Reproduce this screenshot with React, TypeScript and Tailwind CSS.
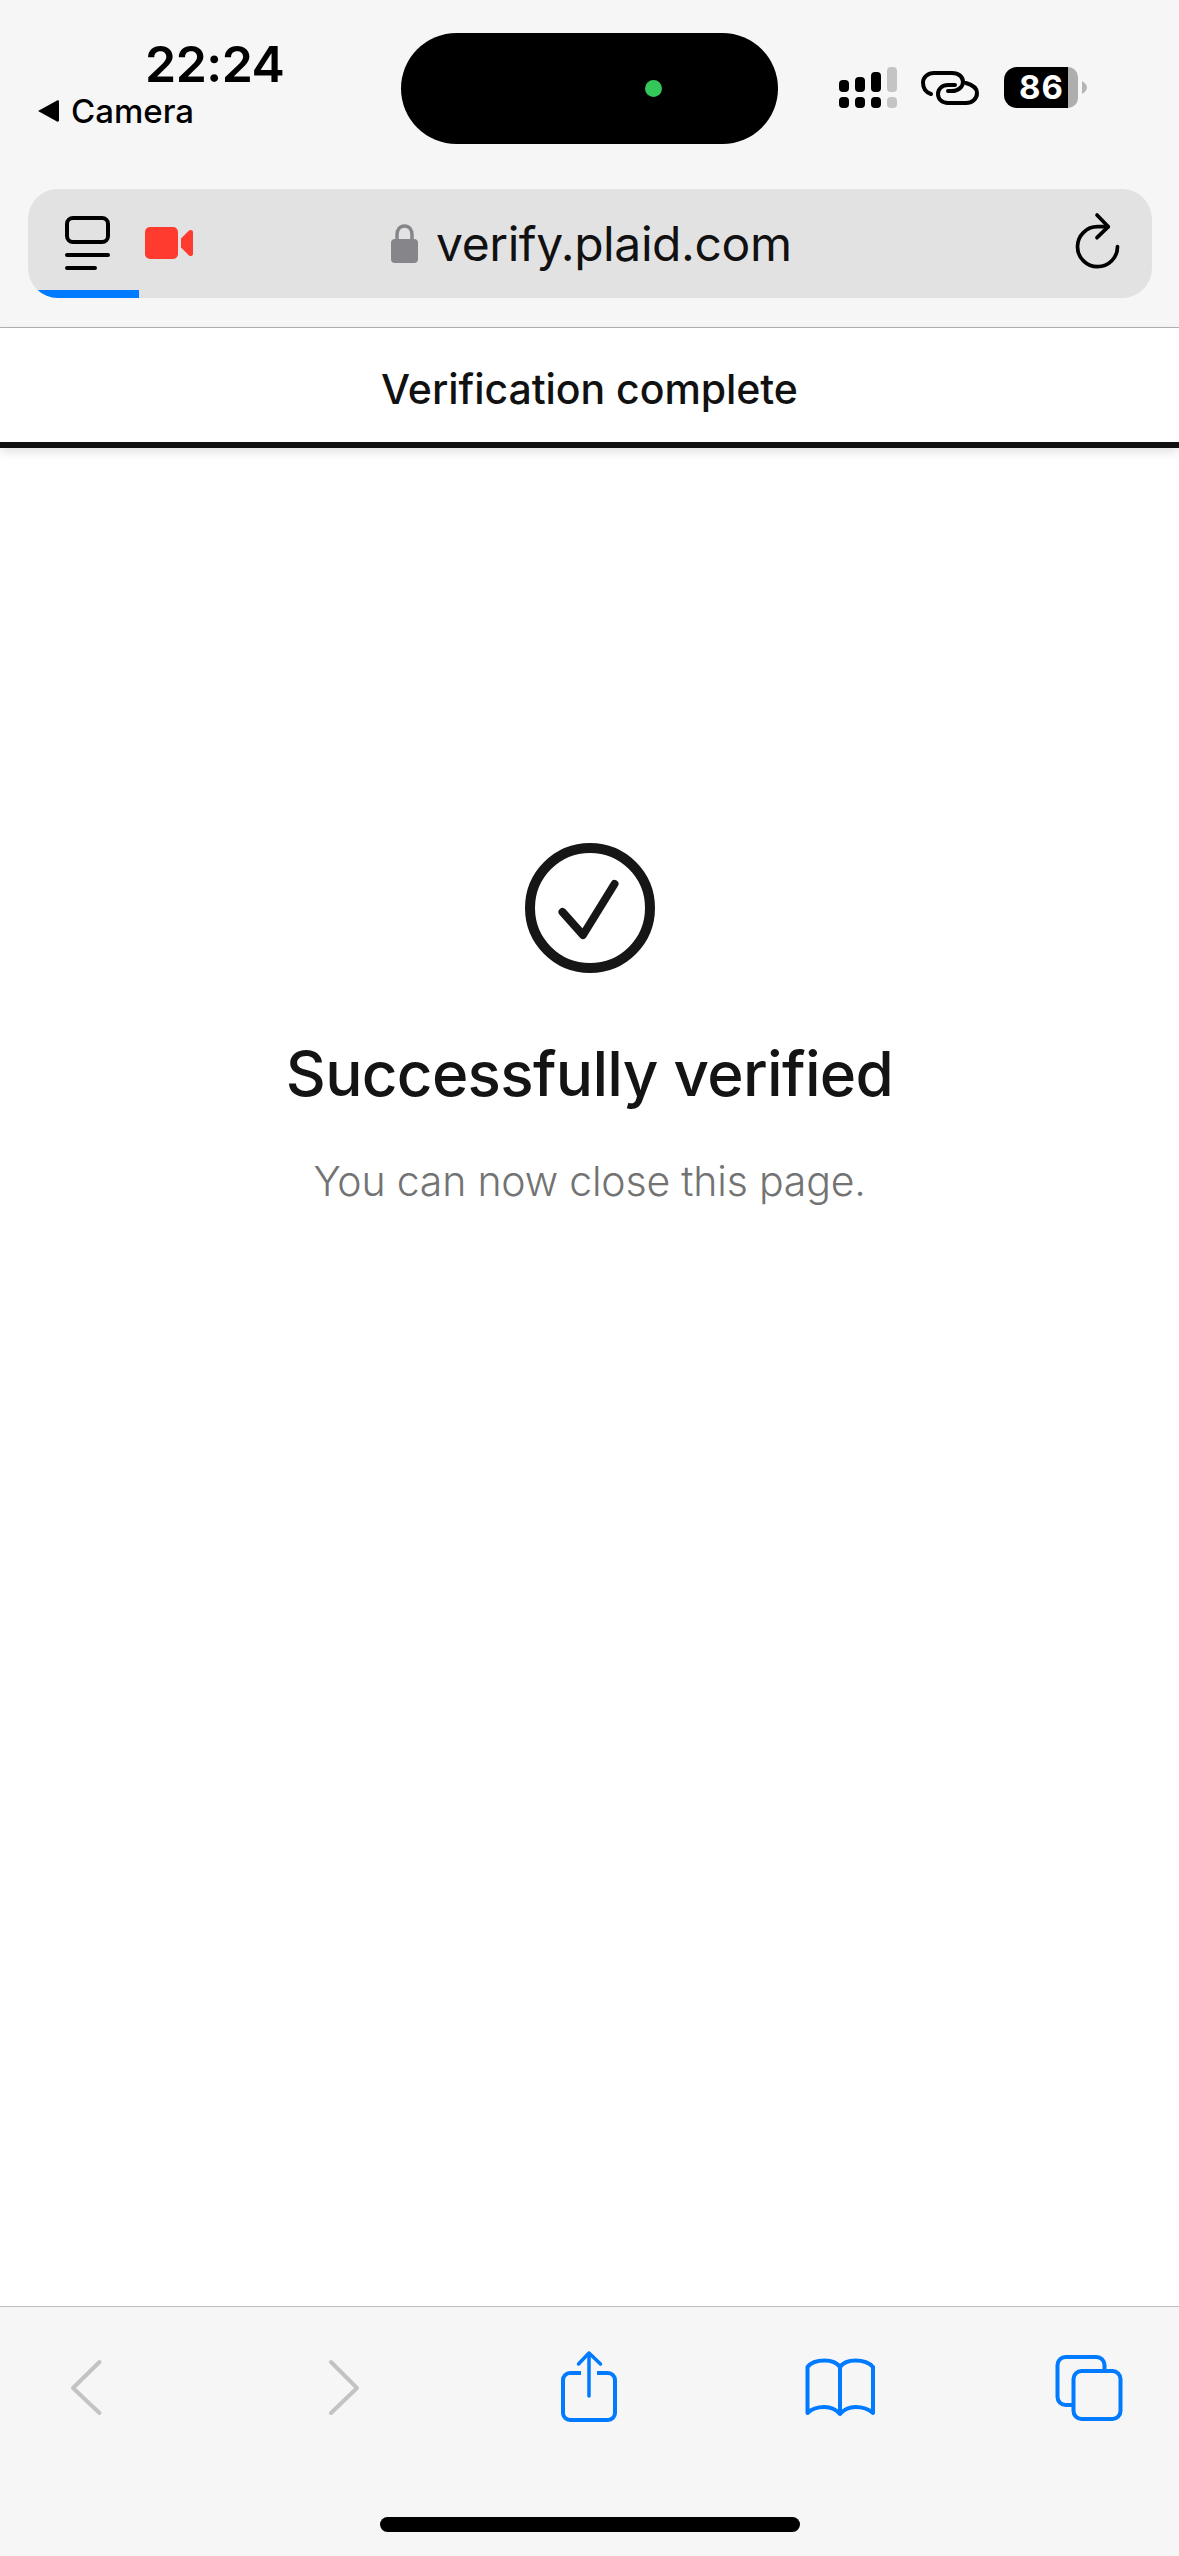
import React from "react";

function Signal() {
  return (
    <svg width="58" height="41" viewBox="0 0 58 41" className="block">
      <g fill="#000">
        <rect x="0" y="13" width="10" height="12" rx="4" />
        <rect x="16" y="10" width="10" height="15" rx="4" />
        <rect x="32" y="5" width="10" height="20" rx="4" />
        <rect x="0" y="30" width="10" height="11" rx="4" />
        <rect x="16" y="30" width="10" height="11" rx="4" />
        <rect x="32" y="30" width="10" height="11" rx="4" />
      </g>
      <g fill="#c4c4c4">
        <rect x="48" y="0" width="10" height="25" rx="4" />
        <rect x="48" y="30" width="10" height="11" rx="4" />
      </g>
    </svg>
  );
}

function LinkIcon() {
  return (
    <svg width="72" height="50" viewBox="0 0 72 50" fill="none" stroke="#000" strokeWidth="4" strokeLinecap="round" className="block">
      <path d="M17 32C11 30 9 25 9 20.5C9 15 14 11 20 11H38C45 11 49 15 49 20C49 25 44 29 38 29H34" />
      <path d="M52 21C59 23 63 27 63 31C63 37 58 41 52 41H34C28 41 24 37 24 32C24 27 28 23 34 23H41" />
    </svg>
  );
}

function Battery() {
  return (
    <div className="flex items-center">
      <div className="w-[64px] h-[41px] bg-black rounded-l-[13px] flex items-center justify-end pr-[4px]">
        <span className="text-white text-[33px] leading-[41px] font-bold tracking-[1px]">86</span>
      </div>
      <div className="w-[10px] h-[41px] bg-[#aeaeae] rounded-r-[13px]" />
      <svg width="5" height="13" viewBox="0 0 5 13" className="block ml-[4px]">
        <path d="M0 0C3 2 5 4 5 6.5C5 9 3 11 0 13Z" fill="#b5b5b5" />
      </svg>
    </div>
  );
}

function TabsOverview() {
  return (
    <svg width="45" height="54" viewBox="0 0 45 54" fill="none" stroke="#000" className="block">
      <rect x="2" y="2" width="41" height="24" rx="6" strokeWidth="4" />
      <rect x="0" y="37" width="45" height="4" rx="2" fill="#000" stroke="none" />
      <rect x="0" y="50" width="32" height="4" rx="2" fill="#000" stroke="none" />
    </svg>
  );
}

function VideoIcon() {
  return (
    <svg width="48" height="32" viewBox="0 0 48 32" className="block">
      <rect x="0" y="0" width="33" height="32" rx="5" fill="#ff3b30" />
      <path d="M36 11.5L44 3.6C45.5 2.4 48 3 48 5V27C48 29 45.500 29.600 44 28.400L36 20.500Z" fill="#ff3b30" />
    </svg>
  );
}

function LockIcon() {
  return (
    <svg width="27" height="39" viewBox="0 0 27 39" className="block">
      <path d="M6 17V11C6 5.500 9 2 13.500 2C18 2 21 5.500 21 11V17" fill="none" stroke="#86868a" strokeWidth="3.500" />
      <rect x="0" y="15" width="27" height="24" rx="4" fill="#86868a" />
    </svg>
  );
}

function Reload() {
  return (
    <svg width="70" height="70" viewBox="0 0 70 70" fill="none" stroke="#000" strokeWidth="3.700" strokeLinecap="round" strokeLinejoin="round" className="block">
      <path d="M32 10L43.300 21.700L32 32.700" />
      <path d="M43 21.700H32.500A20 20 0 1 0 52.500 41.500" />
    </svg>
  );
}

function Back({ flip }: { flip?: boolean }) {
  return (
    <svg width="64" height="72" viewBox="0 0 64 72" fill="none" stroke="#c3c3c3" strokeWidth="4" strokeLinecap="round" strokeLinejoin="round" className="block shrink-0">
      {flip ? <path d="M19 12L45 38L19 63" /> : <path d="M45.500 12L19 38L45.500 63" />}
    </svg>
  );
}

function Share() {
  return (
    <svg width="64" height="72" viewBox="0 0 64 72" fill="none" stroke="#007aff" strokeWidth="4" strokeLinecap="round" strokeLinejoin="round" className="block shrink-0">
      <path d="M24 23H13A7 7 0 0 0 6 30V63A7 7 0 0 0 13 70H51A7 7 0 0 0 58 63V30A7 7 0 0 0 51 23H40" strokeLinecap="butt" />
      <path d="M32 3V46M21.500 14L32 3L43.500 14" strokeWidth="3.500" />
    </svg>
  );
}

function Book() {
  return (
    <svg width="76" height="72" viewBox="6.500 5 76 72" fill="none" stroke="#007aff" strokeWidth="4" strokeLinecap="round" strokeLinejoin="round" className="block shrink-0">
      <path d="M44.500 22C41 17 35 15.500 29 15.500C21 15.500 15 18 12 22V68C16 64 22 62 29 62C35 62 41 65 44.500 69C48 65 54 62 60 62C67 62 73 64 77.500 68V22C74 18 68 15.500 60 15.500C54 15.500 48 17 44.500 22ZM44.500 22V69" />
    </svg>
  );
}

function Tabs() {
  return (
    <svg width="72" height="72" viewBox="0 0 72 72" fill="none" stroke="#007aff" strokeWidth="4" className="block shrink-0">
      <rect x="5.500" y="7" width="47" height="48" rx="8" />
      <rect x="21.500" y="21" width="47" height="48" rx="8" fill="#f6f6f6" />
    </svg>
  );
}

function CheckCircle() {
  return (
    <svg width="130" height="130" viewBox="0 0 130 130" fill="none" stroke="#161616" strokeLinecap="round" strokeLinejoin="round" className="block">
      <circle cx="65" cy="65" r="60" strokeWidth="10" />
      <path d="M37.500 69L58 92L89.500 41" strokeWidth="8" />
    </svg>
  );
}

export default function App() {
  return (
    <div className="w-[1179px] h-[2556px] flex flex-col overflow-hidden bg-white text-black [font-family:Inter,sans-serif]">
      <header className="bg-[#f6f6f6] border-b border-[#b2b2b2] h-[328px] shrink-0">
        <div className="flex items-start h-[189px]">
          <div className="w-[401px] shrink-0 flex flex-col">
            <div className="pl-[145px] pt-[34px] text-[50px] leading-[60px] font-semibold tracking-[-0.5px]">22:24</div>
            <div className="flex items-center pl-[38px] mt-[-1px]">
              <svg width="21" height="22" viewBox="0 0 21 22" className="block">
                <path d="M0 11L19 0.500C20 0 21 0.500 21 1.500V20.500C21 21.500 20 22 19 21.500Z" fill="#000" />
              </svg>
              <span className="ml-[12px] text-[33px] leading-[36px] font-medium">Camera</span>
            </div>
          </div>
          <div className="w-[377px] h-[111px] mt-[33px] shrink-0 rounded-full bg-black flex items-center justify-end pr-[116px]">
            <div className="w-[17px] h-[17px] rounded-full bg-[#34c759]" />
          </div>
          <div className="ml-[61px] mt-[67px] shrink-0"><Signal /></div>
          <div className="ml-[17px] mt-[62px] shrink-0"><LinkIcon /></div>
          <div className="ml-[18px] mt-[67px] shrink-0"><Battery /></div>
        </div>
        <div className="relative ml-[28px] mr-[27px] h-[109px] rounded-[30px] overflow-hidden bg-[#e2e2e2] flex items-center">
          <div className="ml-[37px] mt-[-1px]"><TabsOverview /></div>
          <div className="ml-[35px] mt-[-2px]"><VideoIcon /></div>
          <div className="ml-[198px] mt-[-1px]"><LockIcon /></div>
          <div className="ml-[18px] text-[48px] leading-[60px] tracking-[-0.4px] text-[#111]">verify.plaid.com</div>
          <div className="ml-auto mr-[17px] mt-[-7px]"><Reload /></div>
          <div className="absolute left-0 bottom-0 w-[111px] h-[8px] bg-[#007aff]" />
        </div>
      </header>

      <div className="h-[120px] shrink-0 border-b-[6px] border-[#111] shadow-[0_4px_10px_rgba(0,0,0,0.12)] flex items-center justify-center pt-[7px] bg-white relative">
        <span className="text-[41px] leading-[48px] font-medium tracking-[-0.05px] text-[#111]">Verification complete</span>
      </div>

      <main className="flex-1 flex flex-col items-center pt-[395px]">
        <CheckCircle />
        <h1 className="mt-[62px] text-[62px] leading-[78px] font-medium tracking-[-0.7px] text-[#141414]">Successfully verified</h1>
        <p className="mt-[44px] text-[41px] leading-[48px] font-light tracking-[-0.2px] text-[#737373]">You can now close this page.</p>
      </main>

      <footer className="h-[250px] shrink-0 bg-[#f6f6f6] border-t border-[#bdbdbd] pt-[43px] flex flex-col">
        <div className="flex items-start h-[72px]">
          <div className="ml-[54px]"><Back /></div>
          <div className="ml-[194px]"><Back flip /></div>
          <div className="ml-[181px]"><Share /></div>
          <div className="ml-[180.5px]"><Book /></div>
          <div className="ml-[174px]"><Tabs /></div>
        </div>
        <div className="mt-[95px] mx-auto w-[420px] h-[15px] rounded-full bg-black" />
      </footer>
    </div>
  );
}
